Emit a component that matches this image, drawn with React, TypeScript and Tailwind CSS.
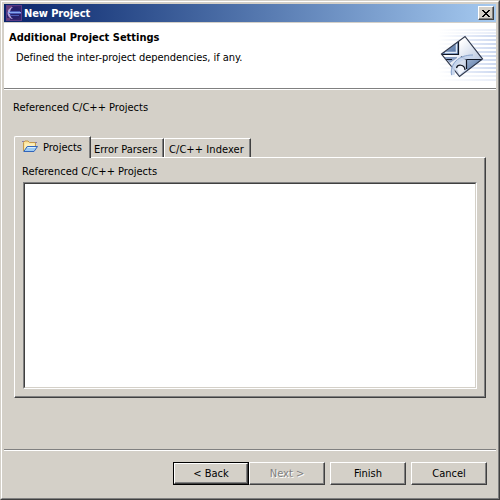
import type { ReactNode } from "react";

const raised =
  "border border-t-white border-l-white border-r-[#404040] border-b-[#404040] shadow-[inset_-1px_-1px_0_#808080]";

function EclipseIcon() {
  return (
    <svg width="16" height="16" viewBox="0 0 16 16" shapeRendering="crispEdges">
      <rect width="16" height="16" fill="#5a3a86" />
      <rect x="1" y="1" width="14" height="14" fill="#33246c" />
      <path d="M1 1h5v2H3v3H1zM1 13h3v2H1z" fill="#6b3f78" />
      <circle cx="9" cy="8" r="6" fill="#26206a" shapeRendering="auto" />
      <path d="M6 2C0 4 0 12 6 14l1 0C3 12 3 4 7 2z" fill="#b5a3da" shapeRendering="auto" />
      <path d="M4 6h10v1H4zM3 8h12v1H3zM4 10h9v1H4z" fill="#4a58b4" />
      <path d="M2 7h13v1H2z" fill="#86a8f0" />
    </svg>
  );
}

function FolderIcon() {
  return (
    <svg width="16" height="16" viewBox="0 0 16 16">
      <path d="M1.5 12V3.5L3 2h3l1.5 1.5h6V7" fill="#fbe29a" stroke="#c39a4c" />
      <path d="M3 4.5h9.5V8H4L2.5 11z" fill="#fdefba" />
      <path d="M0 2.5h2M13 3.5h2" stroke="#8a7ca8" />
      <path d="M1.8 12.5L5.2 7.5h10.3l-3.5 5z" fill="#9ccbf3" stroke="#3164ba" />
      <path d="M5.7 8.5h8" stroke="#d7efff" />
    </svg>
  );
}

function WizardBanner() {
  const stripes = [1, 4, 7, 11, 15, 19, 23, 27, 31, 35, 39, 43, 47, 51];
  return (
    <svg width="66" height="65" viewBox="0 0 66 65">
      <defs>
        <linearGradient id="stripe" x1="0" x2="1" y1="0" y2="0">
          <stop offset="0" stopColor="#fff" />
          <stop offset="1" stopColor="#c4d2ee" />
        </linearGradient>
        <linearGradient id="paper" x1="0" x2="1" y1="0" y2="1">
          <stop offset="0.3" stopColor="#ffffff" />
          <stop offset="0.85" stopColor="#aebfdc" />
        </linearGradient>
        <linearGradient id="blue" x1="0" x2="1" y1="0" y2="1">
          <stop offset="0" stopColor="#9ab0cf" />
          <stop offset="1" stopColor="#4c6c9e" />
        </linearGradient>
      </defs>
      {stripes.map((y) => (
        <rect key={y} x="8" y={y + 5} width="58" height="2" fill="url(#stripe)" opacity={y < 7 || y > 43 ? 0.4 : 0.85} />
      ))}
      <path d="M11.5 31L35 13.5 52.5 36 29.5 53.5z" fill="url(#paper)" />
      <path d="M12 31L28.5 18.5V32H13z" fill="url(#blue)" />
      <path d="M15 29.5H26.5V20.5" fill="none" stroke="#dfe9f6" strokeWidth="1.5" />
      <path d="M14 34h13v1l-7 5z" fill="#8aa0c4" />
      <path d="M37 37h15L37 48z" fill="url(#blue)" />
      <path d="M12 31.5h17M28.5 18v14M16 36.5h6M36.5 46V36.5H52M31 33.5l5 3" stroke="#101624" fill="none" strokeWidth="1.2" />
      <path d="M11.5 31L35 13.5 52.5 36 29.5 53.5z" fill="none" stroke="#30384c" strokeWidth="1.2" />
      <path d="M23 52C21 43 28 33.5 43 33.5" fill="none" stroke="#c4d4ec" strokeWidth="4" opacity=".9" />
      <path d="M21.5 52C20 41 28 32 43 32" fill="none" stroke="#8ba5cd" />
      <path d="M27 46c0-4 7-5 8 1l-5.5 5z" fill="#f1f5fc" />
      <path d="M26.5 45c1-4 8-4 8.500 2" fill="none" stroke="#11151f" strokeWidth="1.2" />
    </svg>
  );
}

function Button({ children, variant = "normal" }: { children: ReactNode; variant?: "normal" | "default" | "disabled" }) {
  return (
    <button
      className={`h-[23px] w-[76px] shrink-0 bg-[#d4d0c8] ${variant === "default" ? "border border-black" : ""}`}
    >
      <span className={`flex h-full w-full items-center justify-center leading-none ${raised} ${variant === "disabled" ? "text-[#808080] [text-shadow:1px_1px_0_#fff]" : ""}`}>
        {children}
      </span>
    </button>
  );
}

export default function App() {
  return (
    <div className="h-[500px] w-[500px] overflow-hidden border border-t-[#d4d0c8] border-r-[#404040] border-b-[#404040] border-l-[#d4d0c8] bg-[#d4d0c8] text-[11px] leading-[14px] whitespace-nowrap text-black [font-family:'DejaVu_Sans_Condensed','DejaVu_Sans',sans-serif] [font-stretch:condensed]">
      <div className="flex h-full flex-col border border-t-white border-r-[#808080] border-b-[#808080] border-l-white pt-0.5 pr-0.5 pl-0.5">
        <div className="flex h-[18px] shrink-0 items-center bg-linear-to-r from-[#0a246a] to-[#a6caf0] pr-0.5 pl-[2px] text-white">
          <EclipseIcon />
          <span className="ml-[2px] pt-px font-bold tracking-[-0.1px]">New Project</span>
          <button className={`ml-auto flex h-[14px] w-4 items-center justify-center bg-[#d4d0c8] ${raised}`}>
            <svg width="8" height="7" viewBox="0 0 8 7" shapeRendering="crispEdges">
              <path d="M0 0h2v1h1v1h2V1h1V0h2v1H7v1H6v1H5v1h1v1h1v1h1v1H6V6H5V5H3v1H2v1H0V6h1V5h1V4h1V3H2V2H1V1H0z" />
            </svg>
          </button>
        </div>
        <header className="mt-px flex h-[67px] shrink-0 justify-between border-b border-white bg-white shadow-[inset_0_-1px_0_#808080]">
          <div className="pt-[8px] pl-[5px]">
            <h1 className="font-bold">Additional Project Settings</h1>
            <p className="mt-[6px] pl-[7px] tracking-[-0.06px]">Defined the inter-project dependencies, if any.</p>
          </div>
          <WizardBanner />
        </header>
        <main className="flex h-[359px] shrink-0 flex-col pt-[11px] pr-[10px] pl-[10px]">
          <p className="-ml-px h-[35px]">Referenced C/C++ Projects</p>
          <div className="z-10 -mb-px flex h-[22px] items-end">
            <div className="flex h-[22px] w-[77px] rounded-tl-[2px] border-t border-r border-l border-t-white border-r-[#404040] border-l-white bg-[#d4d0c8] pt-[2px] pl-[7px] shadow-[inset_-1px_0_0_#808080]">
              <FolderIcon />
              <span className="ml-[5px] pt-[2px]">Projects</span>
            </div>
            <div className="mb-px flex h-[19px] w-[73px] border-t border-r border-t-white border-r-[#404040] pt-[4px] pl-[3px] shadow-[inset_-1px_0_0_#808080]">
              Error Parsers
            </div>
            <div className="mb-px flex h-[19px] w-[87px] border-t border-r border-l border-t-white border-r-[#404040] border-l-white pt-[4px] pl-[4px] tracking-[0.07px] shadow-[inset_-1px_0_0_#808080]">
              C/C++ Indexer
            </div>
          </div>
          <section className={`h-[241px] w-[472px] pt-[7px] pl-[8px] ${raised}`}>
            <p className="-ml-px h-[17px]">Referenced C/C++ Projects</p>
            <div className="h-[207px] w-[454px] border border-t-[#808080] border-r-white border-b-white border-l-[#808080]">
              <div className="h-full border border-t-[#404040] border-r-[#d4d0c8] border-b-[#d4d0c8] border-l-[#404040] bg-white" />
            </div>
          </section>
        </main>
        <footer className="flex border-t border-[#808080] pt-[12px] pr-[9px] shadow-[inset_0_1px_0_#fff]">
          <div className="ml-auto flex">
            <Button variant="default">&lt; Back</Button>
            <Button variant="disabled">Next &gt;</Button>
            <div className="ml-[5px] flex gap-[5px]">
              <Button>Finish</Button>
              <Button>Cancel</Button>
            </div>
          </div>
        </footer>
      </div>
    </div>
  );
}
